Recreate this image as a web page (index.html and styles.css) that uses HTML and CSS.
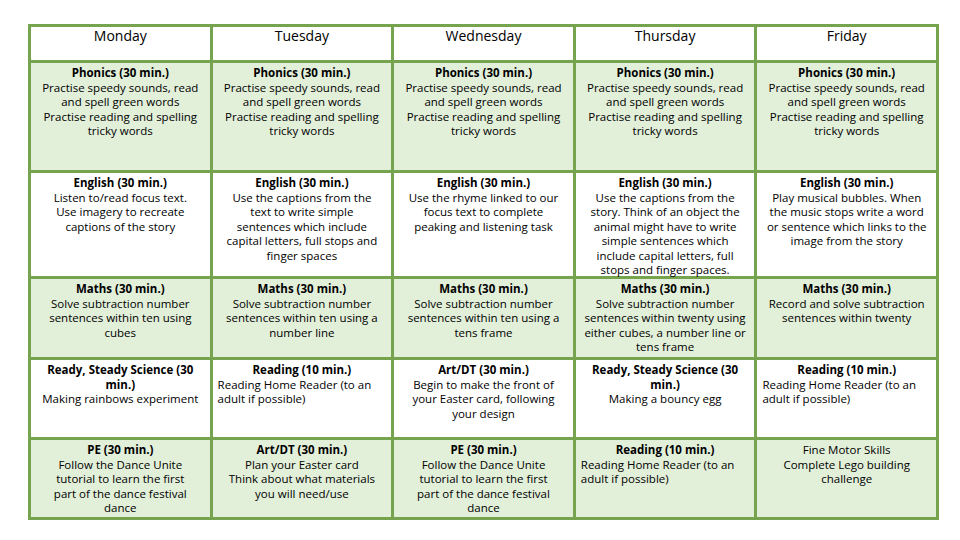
FILE: index.html
```html
<!DOCTYPE html>
<html lang="en">
<head>
<meta charset="utf-8">
<title>Weekly timetable</title>
<link rel="stylesheet" href="styles.css">
</head>
<body>
<div class="grid">
  <div class="cell head">Monday</div>
  <div class="cell head">Tuesday</div>
  <div class="cell head">Wednesday</div>
  <div class="cell head">Thursday</div>
  <div class="cell head">Friday</div>

  <div class="cell tint"><b>Phonics (30 min.)</b>Practise speedy sounds, read<br>and spell green words<br>Practise reading and spelling<br>tricky words</div>
  <div class="cell tint"><b>Phonics (30 min.)</b>Practise speedy sounds, read<br>and spell green words<br>Practise reading and spelling<br>tricky words</div>
  <div class="cell tint"><b>Phonics (30 min.)</b>Practise speedy sounds, read<br>and spell green words<br>Practise reading and spelling<br>tricky words</div>
  <div class="cell tint"><b>Phonics (30 min.)</b>Practise speedy sounds, read<br>and spell green words<br>Practise reading and spelling<br>tricky words</div>
  <div class="cell tint"><b>Phonics (30 min.)</b>Practise speedy sounds, read<br>and spell green words<br>Practise reading and spelling<br>tricky words</div>

  <div class="cell"><b>English (30 min.)</b>Listen to/read focus text.<br>Use imagery to recreate<br>captions of the story</div>
  <div class="cell"><b>English (30 min.)</b>Use the captions from the<br>text to write simple<br>sentences which include<br>capital letters, full stops and<br>finger spaces</div>
  <div class="cell"><b>English (30 min.)</b>Use the rhyme linked to our<br>focus text to complete<br>peaking and listening task</div>
  <div class="cell"><b>English (30 min.)</b>Use the captions from the<br>story. Think of an object the<br>animal might have to write<br>simple sentences which<br>include capital letters, full<br>stops and finger spaces.</div>
  <div class="cell"><b>English (30 min.)</b>Play musical bubbles. When<br>the music stops write a word<br>or sentence which links to the<br>image from the story</div>

  <div class="cell tint"><b>Maths (30 min.)</b>Solve subtraction number<br>sentences within ten using<br>cubes</div>
  <div class="cell tint"><b>Maths (30 min.)</b>Solve subtraction number<br>sentences within ten using a<br>number line</div>
  <div class="cell tint"><b>Maths (30 min.)</b>Solve subtraction number<br>sentences within ten using a<br>tens frame</div>
  <div class="cell tint"><b>Maths (30 min.)</b>Solve subtraction number<br>sentences within twenty using<br>either cubes, a number line or<br>tens frame</div>
  <div class="cell tint"><b>Maths (30 min.)</b>Record and solve subtraction<br>sentences within twenty</div>

  <div class="cell"><b>Ready, Steady Science (30<br>min.)</b>Making rainbows experiment</div>
  <div class="cell left"><b>Reading (10 min.)</b>Reading Home Reader (to an<br>adult if possible)</div>
  <div class="cell"><b>Art/DT (30 min.)</b>Begin to make the front of<br>your Easter card, following<br>your design</div>
  <div class="cell"><b>Ready, Steady Science (30<br>min.)</b>Making a bouncy egg</div>
  <div class="cell left"><b>Reading (10 min.)</b>Reading Home Reader (to an<br>adult if possible)</div>

  <div class="cell tint"><b>PE (30 min.)</b>Follow the Dance Unite<br>tutorial to learn the first<br>part of the dance festival<br>dance</div>
  <div class="cell tint"><b>Art/DT (30 min.)</b>Plan your Easter card<br>Think about what materials<br>you will need/use</div>
  <div class="cell tint"><b>PE (30 min.)</b>Follow the Dance Unite<br>tutorial to learn the first<br>part of the dance festival<br>dance</div>
  <div class="cell tint left"><b>Reading (10 min.)</b>Reading Home Reader (to an<br>adult if possible)</div>
  <div class="cell tint">Fine Motor Skills<br>Complete Lego building<br>challenge</div>
</div>
</body>
</html>
```

FILE: styles.css
```css
html, body {
  margin: 0;
  padding: 0;
  background: #ffffff;
}

body {
  font-family: "Open Sans", "DejaVu Sans", sans-serif;
  color: #000000;
}

.grid {
  margin: 24px 0 0 28px;
  width: 911px;
  box-sizing: border-box;
  display: grid;
  grid-template-columns: repeat(5, 1fr);
  grid-template-rows: 33px 107px 103px 78px 77px 77px;
  gap: 3px;
  padding: 3px;
  background: #76a34e;
}

.cell {
  background: #ffffff;
  font-size: 11.5px;
  line-height: 14.5px;
  text-align: center;
  padding: 3px 5px 0;
  white-space: nowrap;
}

.cell b {
  display: block;
  text-align: center;
  font-weight: 700;
}

.tint {
  background: #e2efd9;
}

.left {
  text-align: left;
}

.head {
  font-size: 14px;
  line-height: 17px;
  padding-top: 0;
}
```
